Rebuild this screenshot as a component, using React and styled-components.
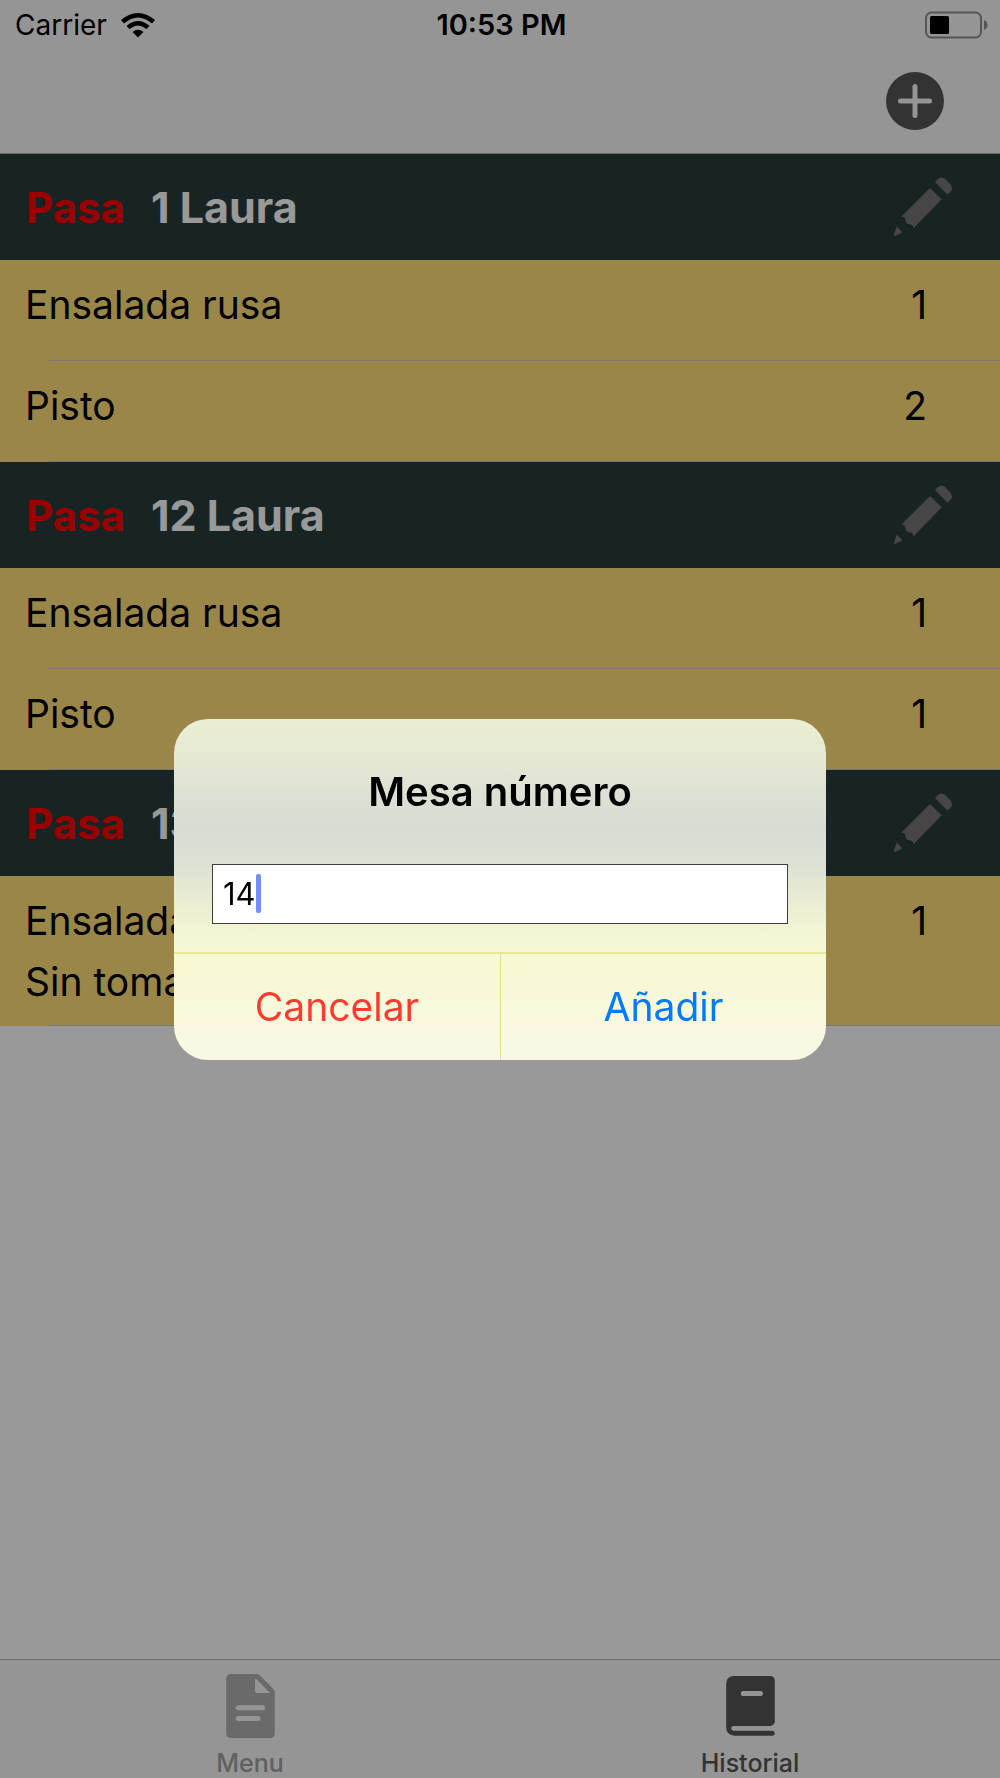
import React, { useState } from 'react';
import styled, { createGlobalStyle } from 'styled-components';

const GlobalStyle = createGlobalStyle`
  * {
    box-sizing: border-box;
  }
  body {
    margin: 0;
    background: #fff;
    color: #000;
    font-family: Inter, 'Liberation Sans', sans-serif;
  }
  button,
  input {
    font-family: inherit;
  }
`;

const Screen = styled.div`
  display: flex;
  flex-direction: column;
  min-height: 100vh;
`;

const TopBar = styled.header`
  height: 154px;
  background: #f8f8f8;
  border-bottom: 1px solid #b2b2b2;
`;

const StatusBar = styled.div`
  display: grid;
  grid-template-columns: 1fr auto 1fr;
  align-items: center;
  height: 50px;
  padding: 0 12px 0 15px;
  font-size: 28px;
  line-height: 50px;
`;

const Carrier = styled.div`
  display: flex;
  align-items: center;
  gap: 14px;
`;

const Clock = styled.span`
  font-size: 29px;
  font-weight: 600;
`;

const BatteryIcon = styled.svg`
  justify-self: end;
`;

const NavBar = styled.div`
  display: flex;
  justify-content: flex-end;
  padding: 21px 55px 0;
`;

const IconButton = styled.button`
  display: flex;
  padding: 0;
  border: 0;
  background: none;
`;

const Orders = styled.main`
  flex: 1;
`;

const TableHeader = styled.div`
  display: flex;
  align-items: center;
  justify-content: space-between;
  height: 106px;
  padding: 0 47px 0 26px;
  background: #283c3c;
`;

const TableTitle = styled.h2`
  display: flex;
  align-items: baseline;
  gap: 26px;
  margin: 0;
  color: #fff;
  font-size: 43px;
  font-weight: 700;
`;

const Pass = styled.span`
  color: #f00;
  font-size: 42px;
`;

const Dishes = styled.ul`
  margin: 0;
  padding: 0;
  list-style: none;
`;

const Dish = styled.li`
  display: flex;
  justify-content: space-between;
  min-height: 101px;
  padding: 14px 73px 14px 25px;
  background: linear-gradient(#c8c7cc, #c8c7cc) 49px 100% / 100% 1px no-repeat #ffdf78;
  font-size: 39px;
  line-height: 61px;
`;

const Note = styled.div``;

const TabBar = styled.nav`
  display: grid;
  grid-template-columns: 1fr 1fr;
  height: 119px;
  background: #f8f8f8;
  border-top: 1px solid #b2b2b2;
`;

const Tab = styled.a`
  display: flex;
  flex-direction: column;
  align-items: center;
  justify-content: space-between;
  padding-top: 14px;
  color: ${(props) => (props.$active ? '#555' : '#a0a0a0')};
  font-size: 25px;
  font-weight: 500;
  line-height: 30px;
  text-decoration: none;
`;

const Scrim = styled.div`
  position: fixed;
  inset: 0;
  display: flex;
  align-items: center;
  justify-content: center;
  background: rgba(0, 0, 0, 0.4);
`;

const Dialog = styled.form`
  width: 652px;
  max-width: 90%;
  overflow: hidden;
  border-radius: 34px;
  background: linear-gradient(
    #ebeed2 0,
    #e6e9d2 36px,
    #dbe0d4 80px,
    #d7ddd4 110px,
    #dbe0d4 142px,
    #ebeed3 184px,
    #f5f6d4 220px,
    #f8f9d4 250px,
    #f8f8dc 290px,
    #f9f8e6 100%
  );
`;

const DialogBody = styled.div`
  display: flex;
  flex-direction: column;
  padding: 43px 38px 28px;
`;

const DialogLabel = styled.label`
  margin-bottom: 42px;
  font-size: 40px;
  font-weight: 600;
  line-height: 60px;
  text-align: center;
`;

const Field = styled.div`
  position: relative;
  display: flex;
`;

const TableInput = styled.input`
  width: 100%;
  height: 60px;
  padding: 0 10px;
  border: 1px solid #3c4038;
  border-radius: 0;
  outline: none;
  background: #fff;
  color: #000;
  caret-color: transparent;
  font-size: 31px;
`;

const Caret = styled.span`
  position: absolute;
  top: 10px;
  left: 44px;
  width: 5px;
  height: 39px;
  border-radius: 2px;
  background: #7290f5;
`;

const Actions = styled.div`
  display: grid;
  grid-template-columns: 1fr 1fr;
  border-top: 2px solid #e6e797;
`;

const Action = styled.button`
  height: 106px;
  padding: 0;
  border: 0;
  background: none;
  color: ${(props) => (props.$cancel ? '#ff3b30' : '#007aff')};
  font-size: 39px;

  & + & {
    border-left: 1px solid #dfe08c;
  }
`;

const Pencil = () => (
  <svg width="60" height="60" viewBox="0 0 60 60" fill="#757675" aria-hidden="true">
    <path d="M42 5L45 2Q48.500 -1 52 2L57 7Q60 10.500 58.500 13.500L54.500 17.700Z" />
    <path d="M37 11L48.700 22.300L20.500 51.200L19.300 48L14.500 46.800L12.800 45L12 41L10.500 40L8.500 39.500Z" />
    <path d="M3.800 49.500L9.500 55.500L2 59Q.5 59.500 1 57.500Z" />
  </svg>
);

const orders = [
  {
    table: '1 Laura',
    dishes: [
      { name: 'Ensalada rusa', amount: 1 },
      { name: 'Pisto', amount: 2 },
    ],
  },
  {
    table: '12 Laura',
    dishes: [
      { name: 'Ensalada rusa', amount: 1 },
      { name: 'Pisto', amount: 1 },
    ],
  },
  {
    table: '13 Laura',
    dishes: [{ name: 'Ensalada rusa', note: 'Sin tomate', amount: 1 }],
  },
];

const App = () => {
  const [tableNumber, setTableNumber] = useState('14');

  return (
    <>
      <GlobalStyle />
      <Screen>
        <TopBar>
          <StatusBar>
            <Carrier>
              Carrier
              <svg width="34" height="25" viewBox="0 0 34 25" aria-hidden="true">
                <path d="M0 7Q17 -7 34 7L31 10.500Q17 -1.500 3 10.500Z" />
                <path d="M5.500 13Q17 3 28.500 13L25.500 16Q17 9 8.500 16Z" />
                <path d="M11.500 19Q17 14.500 22.500 19L17 24.500Z" />
              </svg>
            </Carrier>
            <Clock>10:53 PM</Clock>
            <BatteryIcon width="64" height="28" viewBox="0 0 64 28" aria-hidden="true">
              <rect x="2" y="1.500" width="55" height="25" rx="5.500" fill="none" stroke="#8e8e8e" strokeWidth="2" />
              <rect x="6" y="5" width="19" height="18" rx="1.500" />
              <path d="M60 9Q63.500 10.500 63.500 14T60 19Z" fill="#8e8e8e" />
            </BatteryIcon>
          </StatusBar>
          <NavBar>
            <IconButton aria-label="Nueva mesa">
              <svg width="60" height="60" viewBox="0 0 60 60" aria-hidden="true">
                <circle cx="30" cy="30" r="29" fill="#555" />
                <path d="M15.500 30H44.500M30 15.500V44.500" stroke="#f8f8f8" strokeWidth="5" strokeLinecap="round" />
              </svg>
            </IconButton>
          </NavBar>
        </TopBar>

        <Orders>
          {orders.map((order) => (
            <section key={order.table}>
              <TableHeader>
                <TableTitle>
                  <Pass>Pasa</Pass>
                  {order.table}
                </TableTitle>
                <IconButton aria-label={`Editar ${order.table}`}>
                  <Pencil />
                </IconButton>
              </TableHeader>
              <Dishes>
                {order.dishes.map((dish) => (
                  <Dish key={dish.name}>
                    <div>
                      {dish.name}
                      {dish.note && <Note>{dish.note}</Note>}
                    </div>
                    <span>{dish.amount}</span>
                  </Dish>
                ))}
              </Dishes>
            </section>
          ))}
        </Orders>

        <TabBar>
          <Tab href="#menu">
            <svg width="49" height="64" viewBox="0 0 145 191" fill="#b1b1b1" aria-hidden="true">
              <path d="M14 0H90Q96 0 100 4L141 45Q145 49 145 54V177Q145 191 131 191H14Q0 191 0 177V14Q0 0 14 0Z" />
              <path d="M86 15V49Q86 57 94 57H131L89 14Z" fill="#f8f8f8" />
              <path d="M36 101H109M36 133H95" stroke="#f8f8f8" strokeWidth="15" strokeLinecap="round" />
            </svg>
            Menu
          </Tab>
          <Tab href="#historial" $active>
            <svg width="49" height="64" viewBox="0 0 145 191" fill="#555" aria-hidden="true">
              <path d="M22 6H131Q145 6 145 20V141Q145 152 132 155H22Q15 155 15 162T22 169H138Q145 169 145 176.500T138 184H24Q0 182 0 159V28Q0 8 22 6Z" />
              <path d="M51 58H102" stroke="#f8f8f8" strokeWidth="15" strokeLinecap="round" />
            </svg>
            Historial
          </Tab>
        </TabBar>
      </Screen>

      <Scrim>
        <Dialog role="dialog" aria-modal="true" onSubmit={(e) => e.preventDefault()}>
          <DialogBody>
            <DialogLabel htmlFor="table-number">Mesa número</DialogLabel>
            <Field>
              <TableInput
                id="table-number"
                type="text"
                inputMode="numeric"
                value={tableNumber}
                onChange={(e) => setTableNumber(e.target.value)}
              />
              <Caret />
            </Field>
          </DialogBody>
          <Actions>
            <Action type="button" $cancel>
              Cancelar
            </Action>
            <Action type="submit">Añadir</Action>
          </Actions>
        </Dialog>
      </Scrim>
    </>
  );
};

export default App;
